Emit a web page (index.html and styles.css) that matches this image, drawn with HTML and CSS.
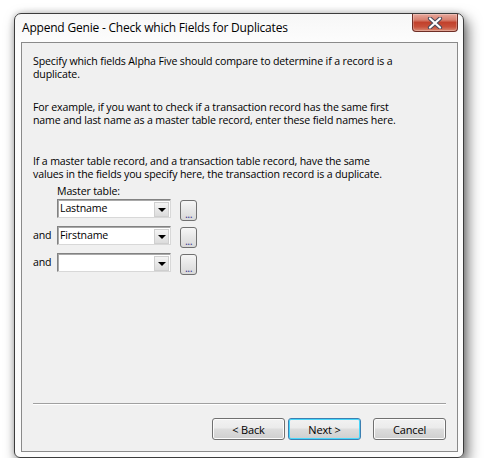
FILE: index.html
```html
<!DOCTYPE html>
<html>
<head>
<meta charset="utf-8">
<link rel="stylesheet" href="styles.css">
</head>
<body>
<div class="window">
  <div class="titlebar">
    <div class="title">Append Genie - Check which Fields for Duplicates</div>
    <div class="close">
      <svg width="18" height="12" viewBox="0 0 18 12">
        <path d="M4 1.5 L14 10.5 M14 1.5 L4 10.5" stroke="#4a4a5a" stroke-width="4.2" stroke-linecap="round"/>
        <path d="M4 1.5 L14 10.5 M14 1.5 L4 10.5" stroke="#ffffff" stroke-width="2.2" stroke-linecap="round"/>
      </svg>
    </div>
  </div>
  <div class="client">
    <p class="p1">Specify which fields Alpha Five should compare to determine if a record is a duplicate.</p>
    <p class="p2">For example, if you want to check if a transaction record has the same first name and last name as a master table record, enter these field names here.</p>
    <p class="p3">If a master table record, and a transaction table record, have the same values in the fields you specify here, the transaction record is a duplicate.</p>
    <div class="label">Master table:</div>
    <div class="fields">
      <div class="row">
        <span class="and"></span>
        <div class="combo"><span class="val">Lastname</span><span class="arrow"><i></i></span></div>
        <div class="dots"><span>...</span></div>
      </div>
      <div class="row">
        <span class="and">and</span>
        <div class="combo"><span class="val">Firstname</span><span class="arrow"><i></i></span></div>
        <div class="dots"><span>...</span></div>
      </div>
      <div class="row">
        <span class="and">and</span>
        <div class="combo"><span class="val"></span><span class="arrow"><i></i></span></div>
        <div class="dots"><span>...</span></div>
      </div>
    </div>
    <div class="spacer"></div>
    <div class="sep"></div>
    <div class="buttons">
      <button class="btn">&lt; Back</button>
      <button class="btn default">Next &gt;</button>
      <button class="btn cancel">Cancel</button>
    </div>
  </div>
</div>
</body>
</html>
```
FILE: styles.css
```css
html, body {
  margin: 0;
  padding: 0;
  background: #ffffff;
}
body {
  padding: 13px 0 0 14px;
  font-family: "Open Sans", "Noto Sans", sans-serif;
  font-size: 10.6px;
  letter-spacing: -0.15px;
  color: #000;
}
.window {
  width: 448px;
  height: 443px;
  border: 1px solid #3c3c3c;
  border-radius: 7px 7px 6px 6px;
  background: linear-gradient(#f7f7f7, #fdfdfd 30px, #fbfbfb);
  box-shadow: 4px 6px 14px rgba(0,0,0,0.55), 0 0 6px rgba(0,0,0,0.2);
  display: flex;
  flex-direction: column;
}
.titlebar {
  height: 28px;
  display: flex;
  justify-content: space-between;
  align-items: flex-start;
}
.title {
  padding: 6px 0 0 7px;
  font-size: 12px;
  letter-spacing: -0.2px;
  line-height: 16px;
  color: #000;
}
.close {
  width: 44px;
  height: 17px;
  margin-right: 5px;
  border: 1px solid #6e2e26;
  border-top: none;
  border-radius: 0 0 4px 4px;
  background: linear-gradient(#e7a89c 0%, #d7806f 35%, #c2412c 50%, #c8503a 75%, #d98a74 100%);
  display: flex;
  align-items: center;
  justify-content: center;
  box-shadow: inset 0 0 0 1px rgba(255,255,255,0.25);
}
.close svg { display: block; }
.client {
  margin: 0 5px 0 6px;
  height: 408px;
  border: 1px solid #8a8a8a;
  background: #f0f0f0;
  display: flex;
  flex-direction: column;
  padding: 0 11px 0 11px;
}
p {
  margin: 0;
  line-height: 13px;
  width: 366px;
}
.p1 { margin-top: 12px; }
.p2 { margin-top: 20px; }
.p3 { margin-top: 28px; }
.label {
  margin: 4px 0 0 24px;
  line-height: 13px;
}
.fields {
  display: flex;
  flex-direction: column;
  gap: 5px;
  margin-top: 1px;
}
.row {
  display: flex;
  align-items: flex-start;
}
.and {
  width: 24px;
  line-height: 19px;
}
.combo {
  width: 109px;
  height: 17px;
  border: 1px solid #7a7a7a;
  border-color: #828282 #d8d8d8 #d8d8d8 #828282;
  box-shadow: inset 1px 1px 0 #a9a9a9;
  background: #fff;
  display: flex;
  align-items: center;
  justify-content: space-between;
  padding: 0 1px 0 2px;
  box-sizing: content-box;
}
.val { line-height: 15px; }
.arrow {
  width: 15px;
  height: 15px;
  margin-top: 1px;
  background: linear-gradient(#f4f4f4, #dcdcdc);
  border: 1px solid #cfcfcf;
  box-sizing: border-box;
  display: flex;
  align-items: center;
  justify-content: center;
}
.arrow i {
  width: 0;
  height: 0;
  border-left: 4px solid transparent;
  border-right: 4px solid transparent;
  border-top: 4px solid #000;
  margin-top: 2px;
}
.dots {
  width: 17px;
  height: 21px;
  margin: 1px 0 0 9px;
  border: 1px solid #707070;
  border-radius: 3px;
  box-sizing: border-box;
  background: linear-gradient(#f6f6f6, #e6e6e6 50%, #d9d9d9);
  display: flex;
  justify-content: center;
  align-items: flex-end;
}
.dots span {
  color: #3a3a90;
  font-size: 11px;
  line-height: 12px;
  letter-spacing: -0.5px;
}
.spacer { flex: 1; }
.sep {
  height: 1px;
  background: #a0a0a0;
  border-bottom: 1px solid #ffffff;
  width: 413px;
}
.buttons {
  display: flex;
  justify-content: flex-end;
  margin: 13px 0 11px 0;
  width: 413px;
}
.btn {
  width: 73px;
  height: 22px;
  margin-left: 3px;
  border: 1px solid #707070;
  border-radius: 3px;
  background: linear-gradient(#f2f2f2 0%, #ebebeb 45%, #dddddd 50%, #cfcfcf 100%);
  font-family: "Open Sans", "Noto Sans", sans-serif;
  font-size: 11px;
  letter-spacing: -0.15px;
  color: #000;
  padding: 0;
  box-shadow: inset 0 0 0 1px #fcfcfc;
}
.btn.default {
  border-color: #3c7fb1;
  box-shadow: inset 0 0 0 1px #48d7fb;
}
.btn.cancel { margin-left: 12px; }
```
